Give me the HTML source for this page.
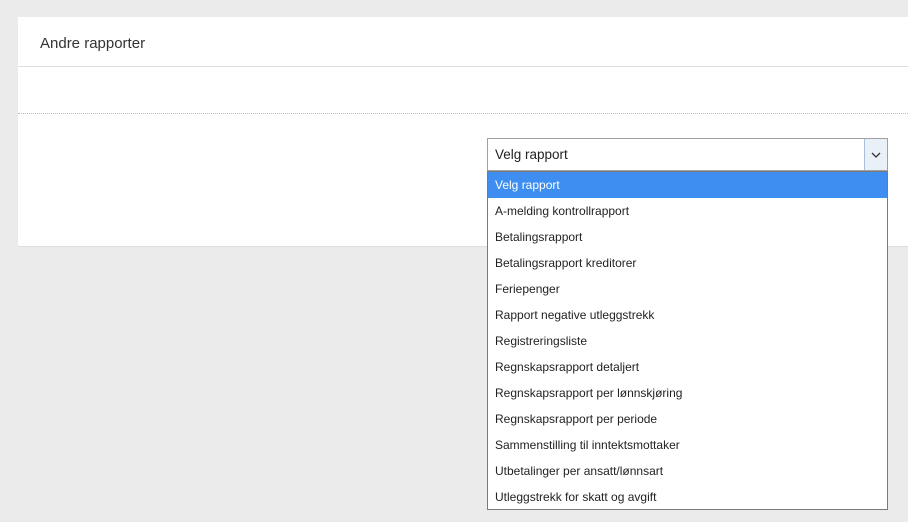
<!DOCTYPE html>
<html><head><style>
body{margin:0;width:908px;height:522px;background:#ebebeb;font-family:"Liberation Sans",sans-serif;position:relative;overflow:hidden}
.card{position:absolute;left:18px;top:17px;width:900px;height:229px;background:#fff;border-bottom:1px solid #ddd}
.title{position:absolute;left:22px;top:18px;font-size:15px;color:#333}
.l1{position:absolute;left:0;right:0;top:49px;border-top:1px solid #ddd}
.l2{position:absolute;left:0;right:0;top:96px;border-top:1px dotted #bbb}
.sel{position:absolute;left:487px;top:138px;width:401px;height:33px;border:1px solid #a0a0a0;box-sizing:border-box;background:#fff;font-size:13.5px;color:#222}
.sel span{position:absolute;left:7px;top:8px}
.btn{position:absolute;right:0;top:0;width:22px;height:31px;border-left:1px solid #a9c0dd;background:#e9f0f8}
.list{position:absolute;left:487px;top:171px;width:401px;height:339px;border:1px solid #7a7a7a;box-sizing:border-box;background:#fff;font-size:12px;color:#222}
.list div{height:26px;line-height:26px;padding-left:7px}
.list .a{background:#3d8ef0;color:#fff}
</style></head><body>
<div class="card"><div class="title">Andre rapporter</div><div class="l1"></div><div class="l2"></div></div>
<div class="sel"><span>Velg rapport</span><div class="btn"><svg width="22" height="31"><path d="M7 14l4 4 4-4" fill="none" stroke="#333" stroke-width="1.3"/></svg></div></div>
<div class="list">
<div class="a">Velg rapport</div>
<div>A-melding kontrollrapport</div>
<div>Betalingsrapport</div>
<div>Betalingsrapport kreditorer</div>
<div>Feriepenger</div>
<div>Rapport negative utleggstrekk</div>
<div>Registreringsliste</div>
<div>Regnskapsrapport detaljert</div>
<div>Regnskapsrapport per lønnskjøring</div>
<div>Regnskapsrapport per periode</div>
<div>Sammenstilling til inntektsmottaker</div>
<div>Utbetalinger per ansatt/lønnsart</div>
<div>Utleggstrekk for skatt og avgift</div>
</div>
</body></html>
